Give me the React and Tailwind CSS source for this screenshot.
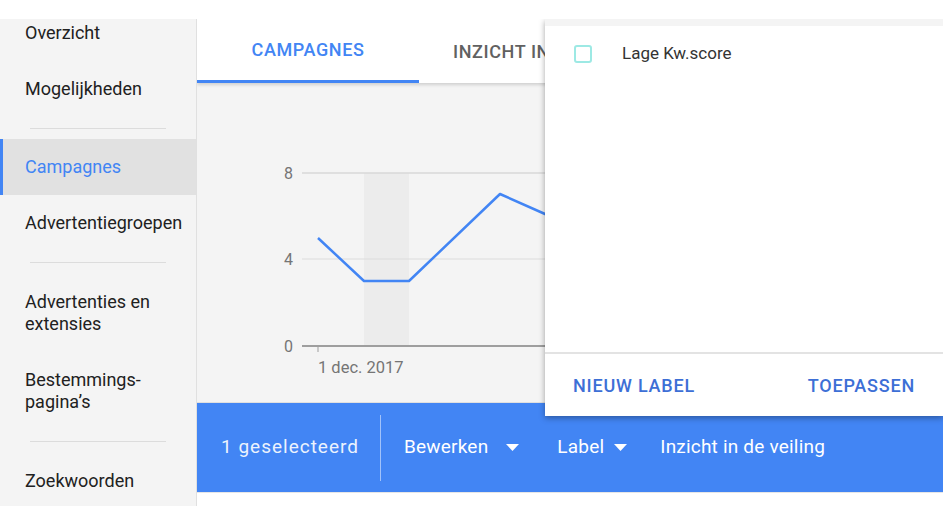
import React from 'react';

const navTop = [
  { label: 'Overzicht', h: 'h-[56px] -mt-[14px]' },
  { label: 'Mogelijkheden', h: 'h-[56px]' },
];

function Divider({ h = 'h-[22px]' }) {
  return (
    <div className={`${h} flex items-center px-[30px]`}>
      <div className="h-px w-full bg-[#dcdcdc]" />
    </div>
  );
}

function NavItem({ children, className = '', active = false }) {
  return (
    <div
      className={`flex items-center pr-3 text-[18px] leading-[22px] ${className} ${
        active ? 'bg-[#e1e1e1] text-[#4285f4] border-l-[3px] border-[#4285f4] pl-[22px]' : 'text-[#212121] pl-[25px]'
      }`}
    >
      {children}
    </div>
  );
}

function Caret({ className = 'ml-[18px]' }) {
  return (
    <svg width="13" height="7" viewBox="0 0 13 7" className={className}>
      <path d="M0 0h13L6.5 7z" fill="white" />
    </svg>
  );
}

function Chart() {
  return (
    <svg width="746" height="320" className="block">
      <rect x="167" y="90" width="45" height="173" fill="#ececec" />
      <line x1="105" y1="90" x2="746" y2="90" stroke="#d9d9d9" strokeWidth="1.5" />
      <line x1="105" y1="176" x2="746" y2="176" stroke="#dcdcdc" strokeWidth="1" />
      <line x1="105" y1="263" x2="746" y2="263" stroke="#9e9e9e" strokeWidth="2" />
      <line x1="121" y1="263" x2="121" y2="269" stroke="#9e9e9e" strokeWidth="1" />
      <g fill="#757575" fontSize="16" fontFamily="Roboto, sans-serif" textAnchor="end">
        <text x="96" y="96">8</text>
        <text x="96" y="182">4</text>
        <text x="96" y="269">0</text>
      </g>
      <text x="121" y="290" fill="#757575" fontSize="16.5" fontFamily="Roboto, sans-serif">
        1 dec. 2017
      </text>
      <polyline
        points="121,155 167,198 212,198 303,111 348,131 400,150"
        fill="none"
        stroke="#4285f4"
        strokeWidth="2.5"
        strokeLinejoin="round"
      />
    </svg>
  );
}

export default function App() {
  return (
    <div className="w-[943px] h-[506px] overflow-hidden bg-white font-['Roboto',sans-serif]">
      <div className="h-[19px]" />
      <div className="flex h-[487px]">
        {/* sidebar */}
        <aside className="w-[197px] shrink-0 bg-[#f4f4f4] border-r border-[#e0e0e0] overflow-hidden">
          {navTop.map((item) => (
            <NavItem key={item.label} className={item.h}>
              {item.label}
            </NavItem>
          ))}
          <Divider />
          <NavItem className="h-[56px]" active>
            Campagnes
          </NavItem>
          <NavItem className="h-[56px]">Advertentiegroepen</NavItem>
          <Divider h="h-[23px]" />
          <NavItem className="h-[78px]">Advertenties en extensies</NavItem>
          <NavItem className="h-[78px]">Bestemmings-pagina’s</NavItem>
          <Divider h="h-[23px]" />
          <NavItem className="h-[56px]">Zoekwoorden</NavItem>
        </aside>

        {/* main */}
        <main className="flex-1 flex flex-col relative overflow-hidden">
          <div className="h-[64px] shrink-0 bg-white flex shadow-[0_2px_3px_rgba(0,0,0,0.15)] z-10">
            <div className="w-[222px] flex items-center justify-center border-b-[3px] border-[#4285f4] text-[18px] font-medium text-[#4285f4] tracking-[0.6px]">
              CAMPAGNES
            </div>
            <div className="w-[126px] overflow-hidden flex items-center pl-[34px] text-[18px] font-medium text-[#616161] tracking-[0.6px] whitespace-nowrap">
              INZICHT IN DE VEILING
            </div>
          </div>

          <div className="h-[320px] shrink-0 bg-[#f4f4f4] border-b border-[#e0e0e0]">
            <Chart />
          </div>

          <div className="h-[89px] shrink-0 bg-[#4285f4] flex items-center text-white text-[19px] tracking-[0.2px]">
            <span className="pl-[24px] pr-[21px] opacity-90 tracking-[1px]">1 geselecteerd</span>
            <div className="w-px h-[66px] bg-white/50" />
            <span className="flex items-center pl-[23px]">
              Bewerken
              <Caret />
            </span>
            <span className="flex items-center pl-[38px]">
              Label
              <Caret className="ml-[10px]" />
            </span>
            <span className="pl-[33px]">Inzicht in de veiling</span>
          </div>

          <div className="flex-1 bg-white border-t border-[#e6e6e6]" />

          {/* label popup */}
          <div className="absolute left-[348px] top-0 w-[398px] h-[397px] bg-white shadow-[0_2px_6px_rgba(0,0,0,0.35)] z-20 flex flex-col">
            <div className="h-[7px] bg-[#f4f4f4]" />
            <div className="flex items-center h-[58px] pl-[29px] -mt-[1px]">
              <span className="w-[18px] h-[18px] rounded-[3px] border-[2.5px] border-[#9de9e4]" />
              <span className="ml-[30px] text-[17px] text-[#333333]">Lage Kw.score</span>
            </div>
            <div className="flex-1" />
            <div className="h-[64px] border-t-2 border-[#e3e3e3] flex items-center justify-between px-[28px] text-[18px] font-medium text-[#3d6fd6] tracking-[0.8px]">
              <span>NIEUW LABEL</span>
              <span>TOEPASSEN</span>
            </div>
          </div>
        </main>
      </div>
    </div>
  );
}
